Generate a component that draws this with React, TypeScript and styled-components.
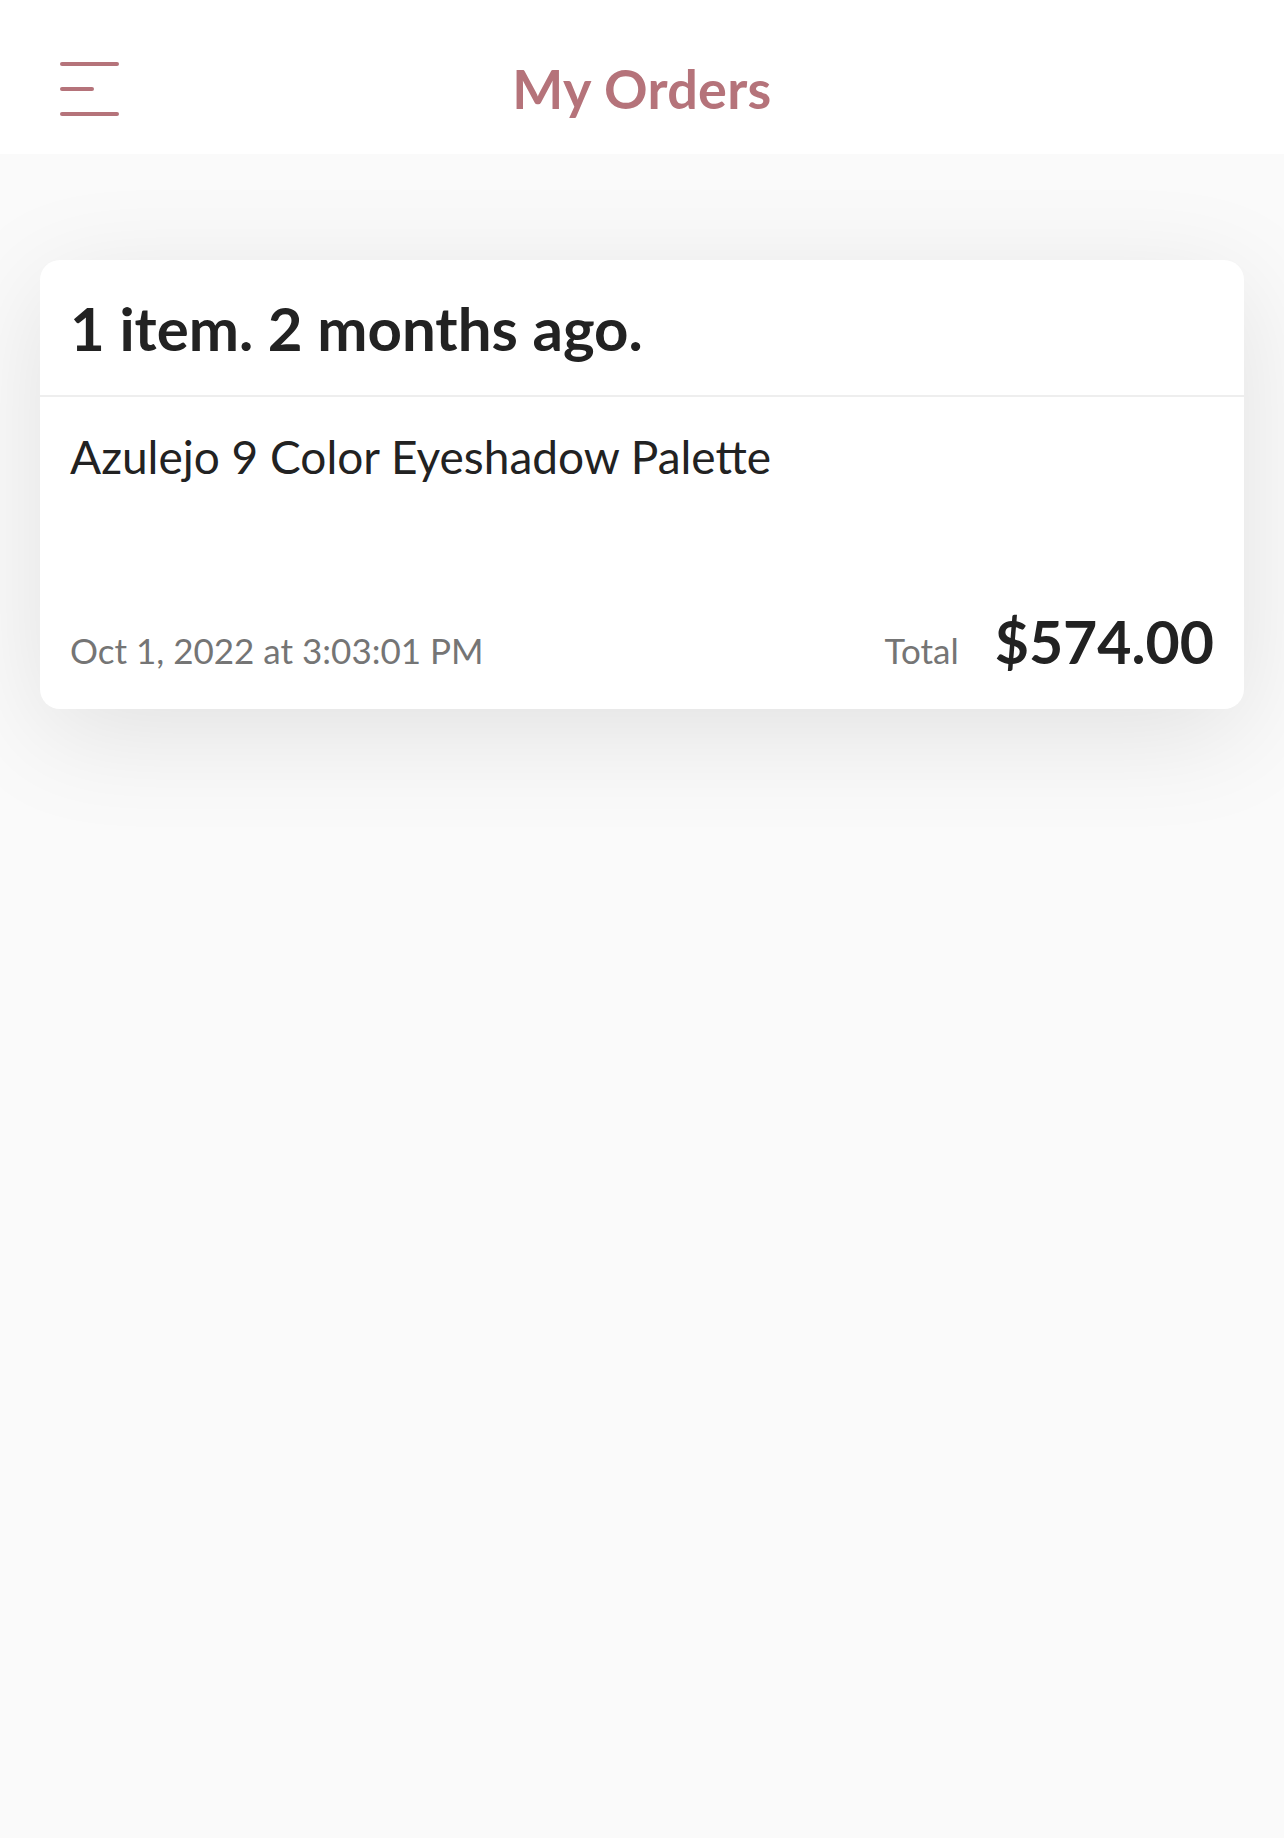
import * as React from "react";
import styled, {createGlobalStyle} from "styled-components";

const GlobalStyle = createGlobalStyle`
    html, body {
        margin: 0;
        padding: 0;
        background: #fafafa;
    }
    body {
        font-family: Lato, "Liberation Sans", Arial, sans-serif;
        -webkit-font-smoothing: antialiased;
    }
`;

const Page = styled.div`
    min-height: 1838px;
    background: #fafafa;
`;

const Header = styled.header`
    position: relative;
    box-sizing: border-box;
    height: 154px;
    padding-top: 24px;
    background: #ffffff;
    display: flex;
    align-items: center;
    justify-content: center;
`;

const MenuButton = styled.button`
    position: absolute;
    left: 56px;
    top: 58px;
    width: 66px;
    height: 62px;
    padding: 0;
    border: none;
    background: transparent;
`;

const Title = styled.h1`
    margin: 0;
    font-size: 54px;
    line-height: 54px;
    font-weight: 700;
    color: #b5737a;
    letter-spacing: 0.3px;
`;

const Content = styled.main`
    padding: 106px 40px 0;
`;

const Card = styled.section`
    background: #ffffff;
    border-radius: 20px;
    box-shadow: 0 24px 110px rgba(0, 0, 0, 0.1);
    overflow: hidden;
`;

const CardHeader = styled.div`
    height: 135px;
    padding: 0 30px;
    display: flex;
    align-items: center;
    border-bottom: 2px solid #eeeeee;
`;

const Heading = styled.h2`
    margin: 0;
    font-size: 60px;
    font-weight: 700;
    color: #222222;
`;

const CardBody = styled.div`
    padding: 34px 30px 32px;
`;

const Product = styled.div`
    font-size: 46px;
    line-height: 52px;
    color: #222222;
`;

const Footer = styled.div`
    margin-top: 123px;
    display: flex;
    justify-content: space-between;
    align-items: baseline;
`;

const Muted = styled.span`
    font-size: 35px;
    color: #757575;
`;

const TotalGroup = styled.div`
    display: flex;
    align-items: baseline;
    gap: 36px;
`;

const Price = styled.span`
    font-size: 59px;
    font-weight: 700;
    color: #222222;
`;

const MenuIcon = () => (
    <svg width="66" height="62" viewBox="0 0 66 62" fill="none">
        <g stroke="#b5737a" strokeWidth="4" strokeLinecap="round">
            <line x1="6" y1="6" x2="61" y2="6"/>
            <line x1="6" y1="31" x2="36" y2="31"/>
            <line x1="6" y1="56" x2="61" y2="56"/>
        </g>
    </svg>
);

const App = () => {
    return (
        <Page>
            <GlobalStyle/>
            <Header>
                <MenuButton aria-label="menu"><MenuIcon/></MenuButton>
                <Title>My Orders</Title>
            </Header>
            <Content>
                <Card>
                    <CardHeader>
                        <Heading>1 item. 2 months ago.</Heading>
                    </CardHeader>
                    <CardBody>
                        <Product>Azulejo 9 Color Eyeshadow Palette</Product>
                        <Footer>
                            <Muted>Oct 1, 2022 at 3:03:01 PM</Muted>
                            <TotalGroup>
                                <Muted>Total</Muted>
                                <Price>$574.00</Price>
                            </TotalGroup>
                        </Footer>
                    </CardBody>
                </Card>
            </Content>
        </Page>
    );
};

export default App;
